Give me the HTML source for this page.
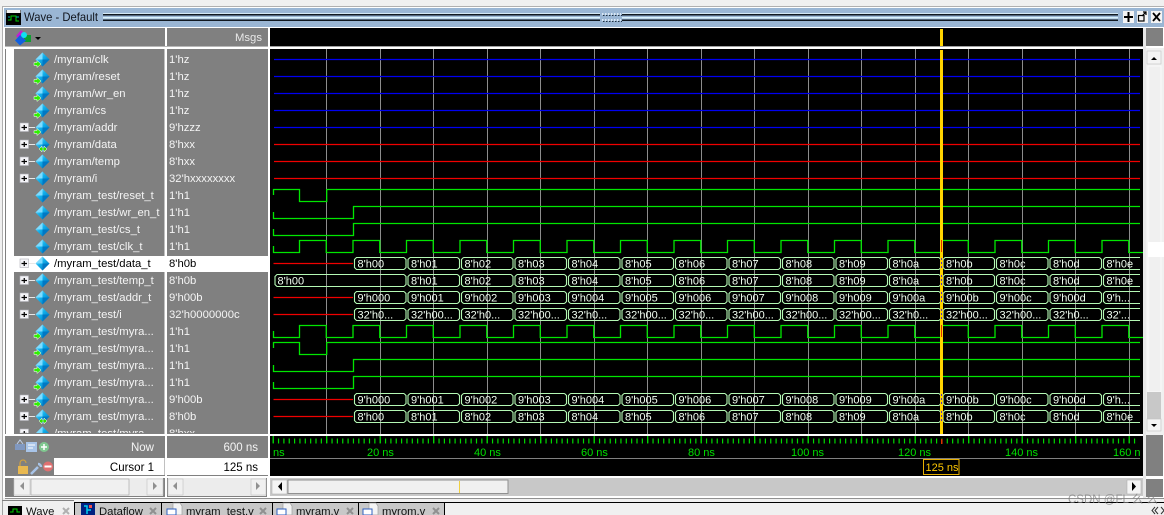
<!DOCTYPE html>
<html><head><meta charset="utf-8"><title>Wave - Default</title>
<style>
html,body{margin:0;padding:0;background:#f0f0f0;width:1164px;height:515px;overflow:hidden}
svg{display:block;font-family:"Liberation Sans",sans-serif;font-size:11px}
.n{fill:#f4f4f4;font-size:11.3px}
.w{fill:#f2fff2}
.g{fill:#00e000}
.s{fill:none;stroke:#00e600;stroke-width:1.3}
.b{fill:none;stroke:#b4f8b4;stroke-width:1.1}
.r{stroke:#f00000;stroke-width:1.2;fill:none}
.bl{stroke:#0000f0;stroke-width:1.2;fill:none}
.t{font-size:11.3px;fill:#101010}
</style></head><body>
<svg width="1164" height="515" viewBox="0 0 1164 515" xmlns="http://www.w3.org/2000/svg">
<defs>
<linearGradient id="dg" x1="0" y1="0" x2="1" y2="1"><stop offset="0" stop-color="#9fe8ff"/><stop offset=".45" stop-color="#10b0ec"/><stop offset="1" stop-color="#0068b0"/></linearGradient>
<clipPath id="rows"><rect x="6" y="48" width="262" height="385"/></clipPath>
<clipPath id="wv"><rect x="270" y="49" width="873" height="385"/></clipPath>
<g id="d"><path d="M42.500 52.500L49.500 59.500L42.500 66.500L35.500 59.500Z" fill="url(#dg)"/><path d="M42.500 52.500L35.500 59.500L42.500 59.500Z" fill="#7fdcff"/><path d="M42.500 66.500L49.500 59.500L42.500 59.500Z" fill="#0078c4"/></g>
<g id="in"><use href="#d"/><path d="M34 62.500h3v-2l4 3.500-4 3.500v-2h-3z" fill="#30f000" stroke="#fff" stroke-width=".5"/></g>
<g id="io"><use href="#d"/><path d="M39 64l3-3v2h2v-2l3 3-3 3v-2h-2v2z" fill="#30e000" stroke="#fff" stroke-width=".5"/></g>
<g id="p"><path d="M28 59.500H35" stroke="#e8e8e8"/><rect x="20" y="55" width="8.500" height="8.500" fill="#f4f4f8" stroke="#b0b0b8" stroke-width=".6"/><path d="M21.500 59.500h5.500M24.250 57v5" stroke="#000" stroke-width="1.200"/></g>
<path id="cl" class="s" d="M273.500 246V252.500H299.500V240.500h26.750v12h26.750v-12h26.750v12h26.750v-12h26.750v12h26.750v-12h26.750v12h26.750v-12h26.750v12h26.750v-12h26.750v12h26.750v-12h26.750v12h26.750v-12h26.750v12h26.750v-12h26.750v12h26.750v-12h26.750v12h26.750v-12h26.750v12h26.750v-12h26.750v12h26.750v-12h26.750v12h26.750v-12h26.750v12h26.750v-12h26.750v12h26.750v-12h26.750v12h26.750v-12h26.750v12H1140"/>
<path id="rs" class="s" d="M273.500 195V189.500H299.500V201.500H326.700V189.500H1140"/>
<path id="we" class="s" d="M273.500 212V218.500H353.500V206.500H1140"/>
<g id="bt">
<path class="b" d="M404-6l2 2v8l-2 2m6-12l-2 2v8l2 2m47.500-12l2 2v8l-2 2m6-12l-2 2v8l2 2m47.500-12l2 2v8l-2 2m6-12l-2 2v8l2 2m47.500-12l2 2v8l-2 2m6-12l-2 2v8l2 2m47.500-12l2 2v8l-2 2m6-12l-2 2v8l2 2m47.500-12l2 2v8l-2 2m6-12l-2 2v8l2 2m47.500-12l2 2v8l-2 2m6-12l-2 2v8l2 2m47.500-12l2 2v8l-2 2m6-12l-2 2v8l2 2m47.500-12l2 2v8l-2 2m6-12l-2 2v8l2 2m47.500-12l2 2v8l-2 2m6-12l-2 2v8l2 2m47.500-12l2 2v8l-2 2m6-12l-2 2v8l2 2m47.500-12l2 2v8l-2 2m6-12l-2 2v8l2 2m47.500-12l2 2v8l-2 2m6-12l-2 2v8l2 2"/>
<path class="b" d="M1099.500-6l2 2v8l-2 2m6-12l-2 2v8l2 2"/>
<path class="b" stroke-dasharray="47.500 6" d="M410-6H1140M410 6H1140"/>
</g>
<g id="bf"><use href="#bt"/><path class="b" d="M404-6H356.500l-2 2v8l2 2H404"/><path class="r" d="M273.500 0H353"/></g>
</defs>

<!-- window chrome -->
<rect width="1164" height="515" fill="#f0f0f0"/>
<rect x="2" y="6" width="1162" height="1" fill="#b0b0b0"/>
<rect x="2" y="6" width="1" height="494" fill="#b0b0b0"/>
<rect x="3" y="7" width="1161" height="491" fill="#ffffff"/>
<rect x="4" y="8" width="1160" height="19" fill="#9ab6d4"/>
<rect x="6" y="10" width="15" height="15" fill="#000"/>
<rect x="6.500" y="10" width="14" height="3" fill="#f4f4f4"/>
<path d="M8 20h3v-4h5v5h3" fill="none" stroke="#00d000"/>
<path d="M8 17h2M16 17h3" stroke="#00b0b0"/>
<text x="24" y="21" font-size="12" textLength="74" lengthAdjust="spacingAndGlyphs" fill="#10141c">Wave - Default</text>
<rect x="103" y="13" width="1015" height="1" fill="#d4e8f4"/><rect x="103" y="14" width="1015" height="1.500" fill="#101820"/>
<rect x="103" y="17" width="1015" height="1.500" fill="#d8f0fa"/><rect x="103" y="19.500" width="1015" height="1.500" fill="#101820"/>
<rect x="600" y="12" width="22" height="11" fill="#9ab6d4"/>
<path d="M602 14h19M602 20h19" stroke="#f0f8ff" stroke-width="1.500" stroke-dasharray="1.500 1.500"/>
<path d="M603 15.500h19M603 21.500h19" stroke="#203040" stroke-width="1" stroke-dasharray="1.500 1.500"/>
<rect x="1123" y="11" width="11" height="12" fill="#f4f4f4"/><path d="M1128.500 12v10M1124 17h9" stroke="#000" stroke-width="2"/>
<rect x="1137" y="11" width="11" height="12" fill="#f4f4f4"/><rect x="1138.500" y="15.500" width="5.500" height="5.500" fill="none" stroke="#000" stroke-width="1.200"/><path d="M1142 16l4-4M1143 12h3v3" fill="none" stroke="#000" stroke-width="1.200"/>
<rect x="1151" y="11" width="11" height="12" fill="#f4f4f4"/><path d="M1153 13l7 8M1160 13l-7 8" stroke="#000" stroke-width="1.800"/>

<!-- panes -->
<rect x="5" y="28" width="160" height="18" fill="#808080"/>
<rect x="167" y="28" width="101" height="18" fill="#808080"/>
<rect x="270" y="28" width="873" height="18" fill="#000"/>
<rect x="1146" y="28" width="17" height="18" fill="#808080"/>
<rect x="5" y="46" width="263" height="1" fill="#b8b8b8"/><rect x="270" y="46" width="873" height="1" fill="#a0a0a0"/>
<rect x="5" y="49" width="1" height="385" fill="#808080"/>
<rect x="14" y="49" width="150.500" height="385" fill="#808080"/>
<rect x="167" y="49" width="101" height="385" fill="#808080"/>
<rect x="270" y="49" width="873" height="385" fill="#000"/>
<!-- selected row -->
<rect x="14" y="256" width="150.500" height="16" fill="#fff"/>
<rect x="167" y="256" width="101" height="16" fill="#fff"/>

<!-- header icon -->
<path d="M21 30l6 6-6 5-5-5z" fill="#c020d0"/><rect x="24" y="35" width="7" height="7" fill="#10a030"/><path d="M20 35l6 5.500-6 5-5-5z" fill="#1060e0"/><circle cx="24" cy="35" r="3" fill="#10e0f0"/>
<path d="M35 37h6l-3 3z" fill="#000"/>
<text x="262" y="41" text-anchor="end" class="n" style="fill:#e8e8e8">Msgs</text>

<!-- names -->
<g clip-path="url(#rows)">
<use href="#in" y="0"/><use href="#in" y="17"/><use href="#in" y="34"/><use href="#in" y="51"/>
<use href="#p" y="68"/><use href="#in" y="68"/>
<use href="#p" y="85"/><use href="#io" y="85"/>
<use href="#p" y="102"/><use href="#d" y="102"/>
<use href="#p" y="119"/><use href="#d" y="119"/>
<use href="#d" y="136"/><use href="#d" y="153"/><use href="#d" y="170"/><use href="#d" y="187"/>
<use href="#p" y="204"/><use href="#d" y="204"/>
<use href="#p" y="221"/><use href="#d" y="221"/>
<use href="#p" y="238"/><use href="#d" y="238"/>
<use href="#p" y="255"/><use href="#d" y="255"/>
<use href="#in" y="272"/><use href="#in" y="289"/><use href="#in" y="306"/><use href="#in" y="323"/>
<use href="#p" y="340"/><use href="#in" y="340"/>
<use href="#p" y="357"/><use href="#io" y="357"/>
<use href="#p" y="374"/><use href="#d" y="374"/>
<text class="n" x="54" y="63">/myram/clk</text><text class="n" x="169" y="63">1'hz</text>
<text class="n" x="54" y="80">/myram/reset</text><text class="n" x="169" y="80">1'hz</text>
<text class="n" x="54" y="97">/myram/wr_en</text><text class="n" x="169" y="97">1'hz</text>
<text class="n" x="54" y="114">/myram/cs</text><text class="n" x="169" y="114">1'hz</text>
<text class="n" x="54" y="131">/myram/addr</text><text class="n" x="169" y="131">9'hzzz</text>
<text class="n" x="54" y="148">/myram/data</text><text class="n" x="169" y="148">8'hxx</text>
<text class="n" x="54" y="165">/myram/temp</text><text class="n" x="169" y="165">8'hxx</text>
<text class="n" x="54" y="182">/myram/i</text><text class="n" x="169" y="182">32'hxxxxxxxx</text>
<text class="n" x="54" y="199">/myram_test/reset_t</text><text class="n" x="169" y="199">1'h1</text>
<text class="n" x="54" y="216">/myram_test/wr_en_t</text><text class="n" x="169" y="216">1'h1</text>
<text class="n" x="54" y="233">/myram_test/cs_t</text><text class="n" x="169" y="233">1'h1</text>
<text class="n" x="54" y="250">/myram_test/clk_t</text><text class="n" x="169" y="250">1'h1</text>
<text class="n" style="fill:#000" x="54" y="267">/myram_test/data_t</text><text class="n" style="fill:#000" x="169" y="267">8'h0b</text>
<text class="n" x="54" y="284">/myram_test/temp_t</text><text class="n" x="169" y="284">8'h0b</text>
<text class="n" x="54" y="301">/myram_test/addr_t</text><text class="n" x="169" y="301">9'h00b</text>
<text class="n" x="54" y="318">/myram_test/i</text><text class="n" x="169" y="318">32'h0000000c</text>
<text class="n" x="54" y="335">/myram_test/myra...</text><text class="n" x="169" y="335">1'h1</text>
<text class="n" x="54" y="352">/myram_test/myra...</text><text class="n" x="169" y="352">1'h1</text>
<text class="n" x="54" y="369">/myram_test/myra...</text><text class="n" x="169" y="369">1'h1</text>
<text class="n" x="54" y="386">/myram_test/myra...</text><text class="n" x="169" y="386">1'h1</text>
<text class="n" x="54" y="403">/myram_test/myra...</text><text class="n" x="169" y="403">9'h00b</text>
<text class="n" x="54" y="420">/myram_test/myra...</text><text class="n" x="169" y="420">8'h0b</text>
<text class="n" x="54" y="437">/myram_test/myra...</text><text class="n" x="169" y="437">8'hxx</text>
</g>

<!-- waves -->
<g clip-path="url(#wv)">
<path stroke="#8c8c8c" stroke-width="1" fill="none" d="M326.500 49V434M380.500 49V434M433.500 49V434M487.500 49V434M540.500 49V434M594.500 49V434M647.500 49V434M701.500 49V434M754.500 49V434M808.500 49V434M861.500 49V434M915.500 49V434M968.500 49V434M1022.500 49V434M1075.500 49V434M1129.500 49V434"/>
<path class="bl" d="M274 59.500H1140M274 76.500H1140M274 93.500H1140M274 110.500H1140M274 127.500H1140"/>
<path class="r" d="M274 144.500H1140M274 161.500H1140M274 178.500H1140"/>
<use href="#rs"/><use href="#we"/><use href="#we" y="17"/><use href="#cl"/>
<use href="#bf" y="263.500"/>
<use href="#bt" y="280.500"/><path class="b" d="M404 274.500H277l-2 2v8l2 2H404"/>
<use href="#bf" y="297.500"/><use href="#bf" y="314.500"/>
<use href="#cl" y="85"/><use href="#rs" y="153"/><use href="#we" y="153"/><use href="#we" y="170"/>
<use href="#bf" y="399.500"/><use href="#bf" y="416.500"/>
<g class="w">
<text x="357.500" y="267.500">8'h00</text><text x="411" y="267.500">8'h01</text><text x="464.500" y="267.500">8'h02</text><text x="518" y="267.500">8'h03</text><text x="571.500" y="267.500">8'h04</text><text x="625" y="267.500">8'h05</text><text x="678.500" y="267.500">8'h06</text><text x="732" y="267.500">8'h07</text><text x="785.500" y="267.500">8'h08</text><text x="839" y="267.500">8'h09</text><text x="892.500" y="267.500">8'h0a</text><text x="946" y="267.500">8'h0b</text><text x="999.500" y="267.500">8'h0c</text><text x="1053" y="267.500">8'h0d</text><text x="1106.500" y="267.500">8'h0e</text>
<text x="277.500" y="284.500">8'h00</text><text x="411" y="284.500">8'h01</text><text x="464.500" y="284.500">8'h02</text><text x="518" y="284.500">8'h03</text><text x="571.500" y="284.500">8'h04</text><text x="625" y="284.500">8'h05</text><text x="678.500" y="284.500">8'h06</text><text x="732" y="284.500">8'h07</text><text x="785.500" y="284.500">8'h08</text><text x="839" y="284.500">8'h09</text><text x="892.500" y="284.500">8'h0a</text><text x="946" y="284.500">8'h0b</text><text x="999.500" y="284.500">8'h0c</text><text x="1053" y="284.500">8'h0d</text><text x="1106.500" y="284.500">8'h0e</text>
<text x="357.500" y="301.500">9'h000</text><text x="411" y="301.500">9'h001</text><text x="464.500" y="301.500">9'h002</text><text x="518" y="301.500">9'h003</text><text x="571.500" y="301.500">9'h004</text><text x="625" y="301.500">9'h005</text><text x="678.500" y="301.500">9'h006</text><text x="732" y="301.500">9'h007</text><text x="785.500" y="301.500">9'h008</text><text x="839" y="301.500">9'h009</text><text x="892.500" y="301.500">9'h00a</text><text x="946" y="301.500">9'h00b</text><text x="999.500" y="301.500">9'h00c</text><text x="1053" y="301.500">9'h00d</text><text x="1106.500" y="301.500">9'h...</text>
<text x="357.500" y="318.500">32'h0...</text><text x="411" y="318.500">32'h00...</text><text x="464.500" y="318.500">32'h0...</text><text x="518" y="318.500">32'h00...</text><text x="571.500" y="318.500">32'h0...</text><text x="625" y="318.500">32'h00...</text><text x="678.500" y="318.500">32'h0...</text><text x="732" y="318.500">32'h00...</text><text x="785.500" y="318.500">32'h00...</text><text x="839" y="318.500">32'h00...</text><text x="892.500" y="318.500">32'h0...</text><text x="946" y="318.500">32'h00...</text><text x="999.500" y="318.500">32'h00...</text><text x="1053" y="318.500">32'h0...</text><text x="1106.500" y="318.500">32'...</text>
<text x="357.500" y="403.500">9'h000</text><text x="411" y="403.500">9'h001</text><text x="464.500" y="403.500">9'h002</text><text x="518" y="403.500">9'h003</text><text x="571.500" y="403.500">9'h004</text><text x="625" y="403.500">9'h005</text><text x="678.500" y="403.500">9'h006</text><text x="732" y="403.500">9'h007</text><text x="785.500" y="403.500">9'h008</text><text x="839" y="403.500">9'h009</text><text x="892.500" y="403.500">9'h00a</text><text x="946" y="403.500">9'h00b</text><text x="999.500" y="403.500">9'h00c</text><text x="1053" y="403.500">9'h00d</text><text x="1106.500" y="403.500">9'h...</text>
<text x="357.500" y="420.500">8'h00</text><text x="411" y="420.500">8'h01</text><text x="464.500" y="420.500">8'h02</text><text x="518" y="420.500">8'h03</text><text x="571.500" y="420.500">8'h04</text><text x="625" y="420.500">8'h05</text><text x="678.500" y="420.500">8'h06</text><text x="732" y="420.500">8'h07</text><text x="785.500" y="420.500">8'h08</text><text x="839" y="420.500">8'h09</text><text x="892.500" y="420.500">8'h0a</text><text x="946" y="420.500">8'h0b</text><text x="999.500" y="420.500">8'h0c</text><text x="1053" y="420.500">8'h0d</text><text x="1106.500" y="420.500">8'h0e</text>
</g>
</g>
<!-- cursor -->
<rect x="940" y="29" width="3" height="17" fill="#ffd400"/>
<rect x="940" y="50" width="3" height="384" fill="#ffd400"/>
<path d="M941.500 240V252M941.500 325V337" stroke="#e03000" stroke-width="1"/>
<path d="M941.500 258V270M941.500 275V287M941.500 292V304M941.500 309V321M941.500 394V406M941.500 411V423" stroke="#5030c0" stroke-width="1" stroke-dasharray="2 2"/>

<!-- right vertical scrollbar -->
<rect x="1143" y="28" width="3" height="470" fill="#e8e8e8"/>
<rect x="1146" y="48" width="18" height="387" fill="#f0f0f0"/>
<rect x="1147" y="51" width="14" height="13" fill="#f4f4f4" stroke="#c0c0c0" stroke-width=".6"/>
<path d="M1151 60h6l-3-3z" fill="#000"/>
<rect x="1148" y="66" width="13" height="326" fill="#f0f0f0" stroke="#fafafa"/>
<rect x="1148" y="242" width="16" height="15" fill="#fff"/>
<rect x="1147" y="392" width="14" height="27" fill="#c8c8c8"/>
<rect x="1147" y="419" width="14" height="12" fill="#f4f4f4" stroke="#c0c0c0" stroke-width=".6"/>
<path d="M1151 424h6l-3 3z" fill="#000"/>
<rect x="1146" y="435" width="17" height="41" fill="#808080"/>
<rect x="1146" y="479" width="17" height="18" fill="#808080"/>

<!-- cursor pane -->
<rect x="5" y="436" width="160" height="40" fill="#808080"/>
<rect x="167" y="436" width="101" height="40" fill="#808080"/>
<rect x="270" y="436" width="873" height="40" fill="#000"/>
<rect x="54" y="458" width="110.500" height="17" fill="#fff"/>
<rect x="167" y="458" width="101" height="17" fill="#fff"/>
<text x="154" y="451" text-anchor="end" class="n" style="font-size:11.5px">Now</text>
<text x="258" y="451" text-anchor="end" class="n" style="font-size:11.5px">600 ns</text>
<text x="154" y="471" text-anchor="end" fill="#000" font-size="11.5">Cursor 1</text>
<text x="258" y="471" text-anchor="end" fill="#000" font-size="11.5">125 ns</text>
<!-- small pane icons -->
<rect x="15" y="444" width="10" height="6" fill="#8098c0"/><path d="M17 444l3-4 3 4" fill="none" stroke="#c0d0e8"/>
<rect x="26" y="442" width="11" height="10" fill="#a8c4e8"/><path d="M28 445h7M28 448h5" stroke="#fff"/>
<circle cx="44" cy="447" r="5" fill="#80c890"/><path d="M41 447h6M44 444v6" stroke="#fff" stroke-width="1.500"/>
<rect x="18" y="466" width="10" height="8" fill="#e8b850"/><path d="M20 466v-3a3 3 0 016 0" fill="none" stroke="#d0a040" stroke-width="1.200"/>
<path d="M31 474l7-7M38 464a3 3 0 013 3" stroke="#a8c4e8" stroke-width="2.500" fill="none"/>
<circle cx="48" cy="466.500" r="5" fill="#e07070"/><rect x="44.500" y="465.500" width="7" height="2" fill="#fff"/>
<!-- ruler -->
<path d="M272.600 441H1139" stroke="#00d800" stroke-width="5" stroke-dasharray="1.200 4.150" fill="none"/>
<path d="M272.600 439.500H1139" stroke="#00d800" stroke-width="7" stroke-dasharray="1.200 52.300" fill="none"/>
<rect x="941" y="439" width="1.500" height="5" fill="#e03000"/>
<rect x="270" y="458" width="870" height="1" fill="#808080"/>
<g class="g">
<text x="273" y="456">ns</text>
<text x="367" y="456">20 ns</text><text x="474" y="456">40 ns</text><text x="581" y="456">60 ns</text><text x="688" y="456">80 ns</text><text x="791" y="456">100 ns</text><text x="898" y="456">120 ns</text><text x="1005" y="456">140 ns</text><text x="1113" y="456">160 n</text>
</g>
<rect x="923.500" y="459.500" width="35.500" height="15" fill="#000" stroke="#e8b000"/>
<text x="925.500" y="471" fill="#ffc800">125 ns</text>

<!-- horizontal scrollbars -->
<rect x="5" y="478" width="160" height="19" fill="#808080"/>
<rect x="14" y="478" width="149" height="18" fill="#ececec"/>
<rect x="14" y="479" width="16" height="16" fill="#f0f0f0" stroke="#c0c0c0" stroke-width=".6"/><path d="M24 482v8l-4-4z" fill="#909090"/>
<rect x="31" y="479" width="98" height="16" fill="#f0f0f0" stroke="#a0a0a0" stroke-width=".6"/>
<rect x="147" y="479" width="16" height="16" fill="#f0f0f0" stroke="#c0c0c0" stroke-width=".6"/><path d="M153 482v8l4-4z" fill="#909090"/>
<rect x="167" y="478" width="100" height="19" fill="#808080"/>
<rect x="168" y="478" width="98" height="18" fill="#ececec"/>
<rect x="168" y="479" width="15" height="16" fill="#f0f0f0" stroke="#c0c0c0" stroke-width=".6"/><path d="M177 482v8l-4-4z" fill="#909090"/>
<rect x="251" y="479" width="15" height="16" fill="#f0f0f0" stroke="#c0c0c0" stroke-width=".6"/><path d="M256 482v8l4-4z" fill="#909090"/>
<rect x="270" y="478" width="873" height="18" fill="#c8c8c8"/>
<rect x="272" y="480" width="15" height="14" fill="#f4f4f4" stroke="#b0b0b0" stroke-width=".6"/><path d="M282 482v9l-4-4.500z" fill="#000"/>
<rect x="288" y="480" width="220" height="13.500" fill="#f0f0f0" stroke="#909090" stroke-width="1"/>
<rect x="459" y="481" width="1" height="12" fill="#f0d040"/>
<rect x="1127" y="480" width="14" height="14" fill="#f4f4f4" stroke="#b0b0b0" stroke-width=".6"/><path d="M1132 482v9l4-4.500z" fill="#000"/>
<rect x="5" y="498" width="1159" height="1" fill="#909090"/>

<!-- tabs -->
<rect x="0" y="500" width="1164" height="15" fill="#f0f0f0"/>
<rect x="74" y="502" width="1090" height="1" fill="#000"/>
<rect x="75" y="503" width="369" height="12" fill="#c8c8c8"/>
<rect x="2" y="500" width="72" height="1" fill="#808080"/>
<rect x="2" y="501" width="1" height="14" fill="#a0a0a0"/>
<path d="M74.500 502V515M161.500 502V515M272.500 502V515M358.500 502V515M444.500 502V515" stroke="#000"/>
<rect x="8" y="504" width="14" height="11" fill="#000"/><rect x="8" y="503" width="14" height="3" fill="#e8e8e8"/><path d="M10 512h3v-3h4v3h3" fill="none" stroke="#00d000"/>
<text x="26" y="515" class="t">Wave</text>
<path d="M63 508l6 6M69 508l-6 6" stroke="#b0b0b0" stroke-width="2"/>
<rect x="81" y="503" width="14" height="12" fill="#002080"/><path d="M84 506h3v4h4M87 510v4" stroke="#00d0f0" stroke-width="1.500" fill="none"/><rect x="89" y="505" width="3" height="3" fill="#f05050"/>
<text x="99" y="515" class="t">Dataflow</text>
<path d="M150 508l6 6M156 508l-6 6" stroke="#909090" stroke-width="2"/>
<path d="M173 503h7l2 3v9h-9z" fill="#f4f4f4" stroke="#a0a0a0" stroke-width=".7"/><rect x="167" y="509" width="9" height="6" fill="#fff" stroke="#3060c0"/>
<text x="186" y="515" class="t">myram_test.v</text>
<path d="M260 508l6 6M266 508l-6 6" stroke="#909090" stroke-width="2"/>
<path d="M283 503h7l2 3v9h-9z" fill="#f4f4f4" stroke="#a0a0a0" stroke-width=".7"/><rect x="277" y="509" width="9" height="6" fill="#fff" stroke="#3060c0"/>
<text x="296" y="515" class="t">myram.v</text>
<path d="M347 508l6 6M353 508l-6 6" stroke="#909090" stroke-width="2"/>
<path d="M369 503h7l2 3v9h-9z" fill="#f4f4f4" stroke="#a0a0a0" stroke-width=".7"/><rect x="363" y="509" width="9" height="6" fill="#fff" stroke="#3060c0"/>
<text x="382" y="515" class="t">myrom.v</text>
<path d="M433 508l6 6M439 508l-6 6" stroke="#909090" stroke-width="2"/>
<rect x="1147" y="504" width="17" height="11" fill="#f0f0f0"/>
<path d="M1155 507l-3 3.500 3 3.500M1158 507l-3 3.500 3 3.500" fill="none" stroke="#303030"/>
<path d="M1161 507l3 3.500-3 3.500" fill="none" stroke="#303030"/>
<text x="1068" y="503" font-size="11.5" fill="#808080" opacity=".75" font-family="'Liberation Sans','Noto Sans CJK SC',sans-serif">CSDN @FL 么 么</text>
</svg>
</body></html>
